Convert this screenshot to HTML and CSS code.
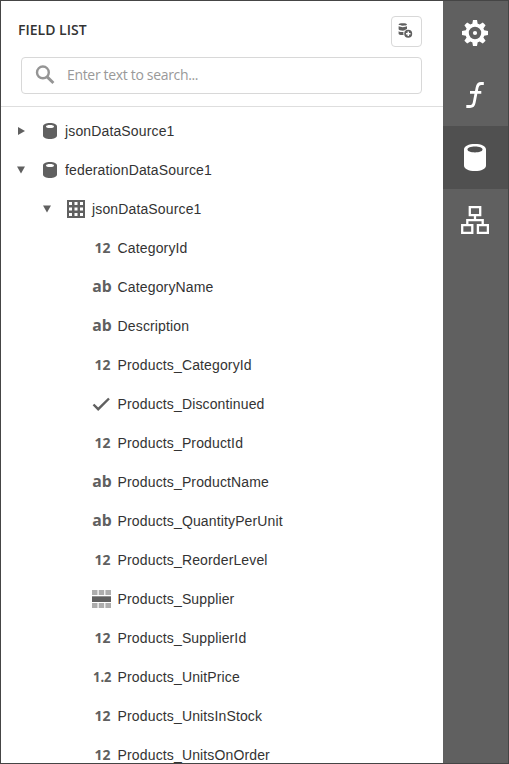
FILE: index.html
```html
<!DOCTYPE html>
<html lang="en">
<head>
<meta charset="utf-8">
<title>Field List</title>
<link rel="stylesheet" href="styles.css">
</head>
<body>
<svg class="defs" width="0" height="0">
  <symbol id="right" viewBox="0 0 8 8"><path d="M1 0L8 4L1 8Z"/></symbol>
  <symbol id="down" viewBox="0 0 8 8"><path d="M0 .5H8L4 7.5Z"/></symbol>
  <symbol id="db" viewBox="0 0 14 16"><path fill-rule="evenodd" d="M0 3.500C0 1.200 3 0 7 0s7 1.200 7 3.500v9C14 14.800 11 16 7 16s-7-1.200-7-3.500ZM3 3.500C3 4.500 4.700 5 7 5s4-.5 4-1.500S9.300 2 7 2 3 2.500 3 3.500Z"/></symbol>
  <symbol id="table" viewBox="0 0 18 18"><path d="M0 0H18V18H0Z"/><path class="cells" d="M2 2H5V5H2ZM7.500 2H10.500V5H7.500ZM13 2H16V5H13ZM2 7.500H5V10.500H2ZM7.500 7.500H10.500V10.500H7.500ZM13 7.500H16V10.500H13ZM2 13H5V16H2ZM7.500 13H10.500V16H7.500ZM13 13H16V16H13Z"/></symbol>
  <symbol id="check" viewBox="0 0 18 18"><path d="M1.500 9.500L6.200 14.200L17 3.500" fill="none" stroke="currentColor" stroke-width="2.400"/></symbol>
  <symbol id="list" viewBox="0 0 19 18"><path class="pale" d="M0 0H5.500V5H0ZM6.700 0H12.200V5H6.700ZM13.400 0H19V5H13.400ZM0 13H5.500V18H0ZM6.700 13H12.200V18H6.700ZM13.400 13H19V18H13.400Z"/><path d="M0 6.300H19V12H0Z"/></symbol>
</svg>
<div class="window">
  <main class="panel">
    <header class="header">
      <div class="title-row">
        <h1 class="title">FIELD LIST</h1>
        <button class="add" aria-label="Add data source">
          <svg width="15" height="15" viewBox="0 0 15 15"><path d="M.6 1.500C.6.700 2.500.300 4.800.300S9 .7 9 1.500 7.100 2.700 4.800 2.700.6 2.300.6 1.500ZM.6 3.300C2.600 4.400 7 4.400 9 3.300V5.900C7.800 6.200 6.900 6.700 6.200 7.600C3.500 7.800.6 7.300.6 6.300ZM.6 8.200C1.900 8.900 3.900 9.100 5.500 9C5.200 10 5.300 11 5.600 12C2.500 12.200.6 11.600.6 10.700Z"/><path fill-rule="evenodd" d="M10.200 6.700a4 4 0 1 0 0 8 4 4 0 0 0 0-8ZM9.500 8.500h1.500V10h1.500v1.500H11V13H9.500V11.500H8V10h1.500Z"/></svg>
        </button>
      </div>
      <div class="search">
        <svg width="20" height="20" viewBox="0 0 20 20"><g fill="none" stroke="currentColor"><circle cx="7.900" cy="7.400" r="5.900" stroke-width="2.400"/><path d="M12.200 11.900L18.400 18" stroke-width="2.900"/></g></svg>
        <span class="placeholder">Enter text to search...</span>
      </div>
    </header>
    <div class="tree">
      <div class="row"><svg class="arrow"><use href="#right"/></svg><svg class="source"><use href="#db"/></svg><span>jsonDataSource1</span></div>
      <div class="row"><svg class="arrow"><use href="#down"/></svg><svg class="source"><use href="#db"/></svg><span>federationDataSource1</span></div>
      <div class="row nested"><svg class="arrow"><use href="#down"/></svg><svg class="grid"><use href="#table"/></svg><span>jsonDataSource1</span></div>
      <div class="row field"><svg class="type"><text x="2.500" y="14" textLength="16" lengthAdjust="spacingAndGlyphs">12</text></svg><span>CategoryId</span></div>
      <div class="row field"><svg class="type"><text class="letters" x=".2" y="14" textLength="19.500" lengthAdjust="spacingAndGlyphs">ab</text></svg><span>CategoryName</span></div>
      <div class="row field"><svg class="type"><text class="letters" x=".2" y="14" textLength="19.500" lengthAdjust="spacingAndGlyphs">ab</text></svg><span>Description</span></div>
      <div class="row field"><svg class="type"><text x="2.500" y="14" textLength="16" lengthAdjust="spacingAndGlyphs">12</text></svg><span>Products_CategoryId</span></div>
      <div class="row field"><svg class="type"><use href="#check"/></svg><span>Products_Discontinued</span></div>
      <div class="row field"><svg class="type"><text x="2.500" y="14" textLength="16" lengthAdjust="spacingAndGlyphs">12</text></svg><span>Products_ProductId</span></div>
      <div class="row field"><svg class="type"><text class="letters" x=".2" y="14" textLength="19.500" lengthAdjust="spacingAndGlyphs">ab</text></svg><span>Products_ProductName</span></div>
      <div class="row field"><svg class="type"><text class="letters" x=".2" y="14" textLength="19.500" lengthAdjust="spacingAndGlyphs">ab</text></svg><span>Products_QuantityPerUnit</span></div>
      <div class="row field"><svg class="type"><text x="2.500" y="14" textLength="16" lengthAdjust="spacingAndGlyphs">12</text></svg><span>Products_ReorderLevel</span></div>
      <div class="row field"><svg class="type"><use href="#list" width="19" height="18"/></svg><span>Products_Supplier</span></div>
      <div class="row field"><svg class="type"><text x="2.500" y="14" textLength="16" lengthAdjust="spacingAndGlyphs">12</text></svg><span>Products_SupplierId</span></div>
      <div class="row field"><svg class="type"><text x="1" y="14" textLength="18.500" lengthAdjust="spacingAndGlyphs">1.2</text></svg><span>Products_UnitPrice</span></div>
      <div class="row field"><svg class="type"><text x="2.500" y="14" textLength="16" lengthAdjust="spacingAndGlyphs">12</text></svg><span>Products_UnitsInStock</span></div>
      <div class="row field"><svg class="type"><text x="2.500" y="14" textLength="16" lengthAdjust="spacingAndGlyphs">12</text></svg><span>Products_UnitsOnOrder</span></div>
    </div>
  </main>
  <nav class="tabs">
    <div class="tab"><svg width="26" height="26" viewBox="-13 -13 26 26"><path fill-rule="evenodd" d="M-2-13H2L2.700-9.200A9.500 9.500 0 0 1 4.600-8.400L7.800-10.600L10.600-7.800L8.400-4.600A9.500 9.500 0 0 1 9.200-2.700L13-2V2L9.200 2.700A9.500 9.500 0 0 1 8.400 4.600L10.600 7.800L7.800 10.600L4.600 8.400A9.500 9.500 0 0 1 2.700 9.200L2 13H-2L-2.700 9.200A9.500 9.500 0 0 1-4.600 8.400L-7.800 10.600L-10.600 7.800L-8.400 4.600A9.500 9.500 0 0 1-9.200 2.700L-13 2V-2L-9.200-2.700A9.500 9.500 0 0 1-8.400-4.600L-10.600-7.800L-7.800-10.600L-4.600-8.400A9.500 9.500 0 0 1-2.700-9.200ZM0-6.200A6.200 6.200 0 1 0 0 6.200A6.200 6.200 0 0 0 0-6.200Z"/><circle r="2.100"/></svg></div>
    <div class="tab"><svg width="18" height="26" viewBox="0 0 18 26"><path d="M17.800 1.500H15C12.600 1.500 11.600 2.800 11.100 5.500L8.200 20.500C7.700 23.500 6.400 24.500 4 24.500H.3M4 10.400H15.300" fill="none" stroke="currentColor" stroke-width="2.800"/></svg></div>
    <div class="tab active"><svg width="22" height="27" viewBox="0 0 21 27" preserveAspectRatio="none"><path fill-rule="evenodd" d="M0 5.500C0 2 4.500 0 10.500 0S21 2 21 5.500V21.500C21 25 16.500 27 10.500 27S0 25 0 21.500ZM3.300 5.500C3.300 7.200 6.500 8.400 10.500 8.400S17.700 7.200 17.700 5.500 14.500 2.600 10.500 2.600 3.300 3.800 3.300 5.500Z"/></svg></div>
    <div class="tab network"><svg width="28" height="28" viewBox="0 0 28 28"><g fill="none" stroke="currentColor" stroke-width="2.300"><path d="M8.800 1.200H19.200V9.100H8.800ZM1.200 19.100H11.300V26.800H1.200ZM16.900 19.100H26.900V26.800H16.900ZM14 9V14.200M6.300 19V14.200H21.700V19"/></g></svg></div>
  </nav>
</div>
</body>
</html>
```

FILE: styles.css
```css
* { box-sizing: border-box; }
body { margin: 0; font-family: "Liberation Sans", Arial, sans-serif; }
svg { display: block; flex: none; fill: currentColor; }
.defs { display: none; }
.window { display: flex; width: 509px; height: 764px; border: 1px solid #454545; background: #fff; overflow: hidden; }
.panel { width: 442px; overflow: hidden; }
.header { height: 106px; padding: 15px 21px 0 17px; border-bottom: 1px solid #dedede; }
.title-row { display: flex; justify-content: space-between; height: 31px; }
.title { margin: 5px 0 0; font: 600 14px/18px "Open Sans", sans-serif; letter-spacing: 0; color: #333; }
.add { display: flex; align-items: center; justify-content: center; width: 31px; height: 31px; padding: 0 2px 2px 0; border: 1px solid #d8d8d8; border-radius: 4px; background: #fff; color: #606060; }
.search { display: flex; align-items: center; gap: 12px; height: 37px; margin: 10px 0 0 3px; padding: 0 0 2px 13px; border: 1px solid #d8d8d8; border-radius: 4px; color: #959595; }
.placeholder { font: 14px/20px "Open Sans", sans-serif; letter-spacing: -.33px; color: #999; }
.tree { padding-top: 4px; }
.row { display: flex; align-items: center; height: 39px; padding-left: 16px; font-size: 14px; letter-spacing: .14px; color: #333; white-space: nowrap; }
.row svg { color: #606060; }
.nested { padding-left: 42px; }
.field { padding-left: 91px; }
.arrow { width: 8px; height: 8px; }
.source { width: 14px; height: 16px; margin: 0 8px 0 18px; }
.grid { width: 18px; height: 18px; margin: 0 7px 0 16px; }
.type { width: 18px; height: 18px; margin-right: 7.6px; overflow: visible; font: 700 14.5px "Open Sans", sans-serif; letter-spacing: 0; }
.letters { font-size: 16px; }
.pale { fill: #adadad; }
.cells { fill: #fff; }
.tabs { width: 65px; background: #606060; color: #fff; }
.tab { display: flex; align-items: center; justify-content: center; height: 63px; padding-right: 2px; }
.tab:first-child { height: 62px; padding-top: 2px; }
.active { background: #505050; }
.network { padding-bottom: 2px; }
```
